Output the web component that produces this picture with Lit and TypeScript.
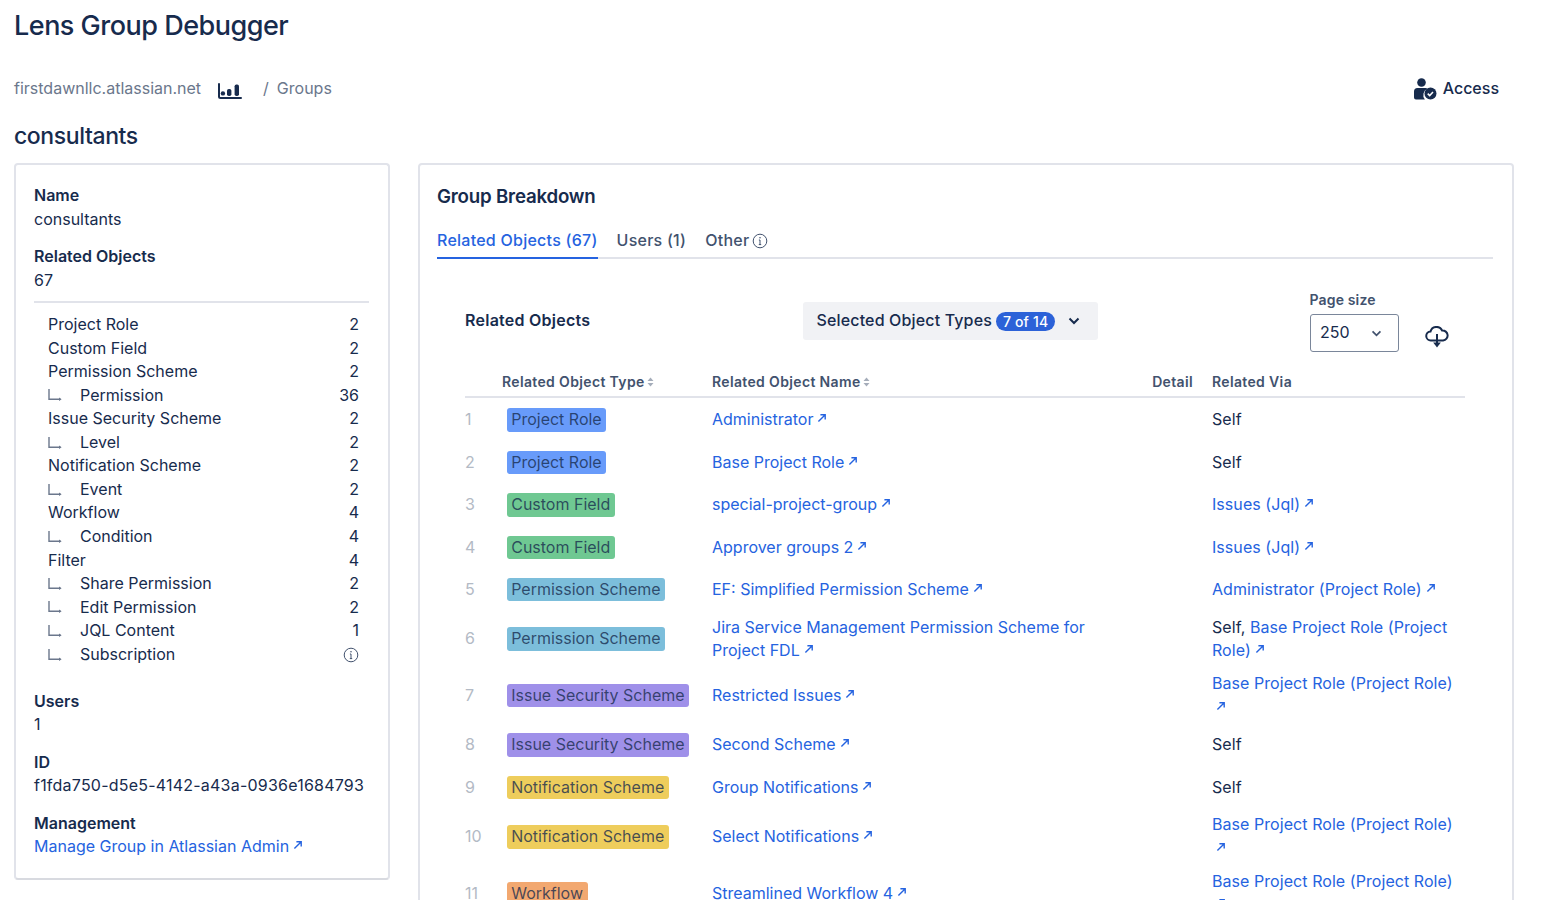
import { LitElement, css, html, svg, TemplateResult } from "lit";
import { customElement } from "lit/decorators.js";

type Kind = "role" | "field" | "perm" | "sec" | "notif" | "flow";

interface Row {
  n: number;
  kind: Kind;
  type: string;
  name: string;
  via: TemplateResult;
  tall?: boolean;
}

const extIcon = html`<svg class="ext" viewBox="0 0 10 10" width="10" height="10" fill="none" stroke="currentColor" stroke-width="1.4"><path d="M1.4 8.6 8 2M3.4 1.8H8.2V6.6"/></svg>`;

const infoIcon = html`<svg class="info" viewBox="0 0 16 16" width="16" height="16" fill="none" stroke="currentColor" stroke-width="1"><circle cx="8" cy="8" r="6.8"/><path d="M8 7v4.6M6.8 11.6h2.4M6.9 7h1.1" stroke-width="1"/><circle cx="8" cy="4.8" r=".8" fill="currentColor" stroke="none"/></svg>`;

const subIcon = html`<svg class="sub" viewBox="0 0 14 12" width="14" height="12" fill="none" stroke="#6b778c" stroke-width="1.4"><path d="M1 0v10.2h11.5"/><path d="M11 8.4 13.6 10.2 11 12z" fill="#6b778c" stroke="none"/></svg>`;

const chartIcon = svg`<path d="M1 1v12.5a1.5 1.5 0 0 0 1.5 1.5H23" fill="none" stroke="currentColor" stroke-width="2" stroke-linecap="round"/><circle cx="4.9" cy="10.4" r="2.2" fill="currentColor"/><rect x="9" y="6" width="4.4" height="7" rx="1.8" fill="currentColor"/><rect x="16.6" y="1.4" width="4.4" height="11.6" rx="1.8" fill="currentColor"/>`;

const link = (t: string) => html`<a>${t}${extIcon}</a>`;
const self = html`Self`;

const rows: Row[] = [
  { n: 1, kind: "role", type: "Project Role", name: "Administrator", via: self },
  { n: 2, kind: "role", type: "Project Role", name: "Base Project Role", via: self },
  { n: 3, kind: "field", type: "Custom Field", name: "special-project-group", via: link("Issues (Jql)") },
  { n: 4, kind: "field", type: "Custom Field", name: "Approver groups 2", via: link("Issues (Jql)") },
  { n: 5, kind: "perm", type: "Permission Scheme", name: "EF: Simplified Permission Scheme", via: link("Administrator (Project Role)") },
  { n: 6, kind: "perm", type: "Permission Scheme", name: "Jira Service Management Permission Scheme for Project FDL", via: html`Self, ${link("Base Project Role (Project Role)")}`, tall: true },
  { n: 7, kind: "sec", type: "Issue Security Scheme", name: "Restricted Issues", via: link("Base Project Role (Project Role)"), tall: true },
  { n: 8, kind: "sec", type: "Issue Security Scheme", name: "Second Scheme", via: self },
  { n: 9, kind: "notif", type: "Notification Scheme", name: "Group Notifications", via: self },
  { n: 10, kind: "notif", type: "Notification Scheme", name: "Select Notifications", via: link("Base Project Role (Project Role)"), tall: true },
  { n: 11, kind: "flow", type: "Workflow", name: "Streamlined Workflow 4", via: link("Base Project Role (Project Role)"), tall: true },
];

const counts: [string, string, boolean][] = [
  ["Project Role", "2", false],
  ["Custom Field", "2", false],
  ["Permission Scheme", "2", false],
  ["Permission", "36", true],
  ["Issue Security Scheme", "2", false],
  ["Level", "2", true],
  ["Notification Scheme", "2", false],
  ["Event", "2", true],
  ["Workflow", "4", false],
  ["Condition", "4", true],
  ["Filter", "4", false],
  ["Share Permission", "2", true],
  ["Edit Permission", "2", true],
  ["JQL Content", "1", true],
  ["Subscription", "", true],
];

const sortIcon = html`<svg class="sort" viewBox="0 0 7 10" width="7" height="10" fill="#a5adba"><path d="M3.5 0.5 6.5 4H.5zM3.5 9.5.5 6h6z"/></svg>`;

@customElement("app-root")
export class AppRoot extends LitElement {
  static styles = css`
    :host {
      display: block;
      height: 900px;
      overflow: hidden;
      box-sizing: border-box;
      padding: 0 33.5px 0 14px;
      background: #fff;
      color: #172b4d;
      font-family: Inter, "Liberation Sans", sans-serif;
      font-size: 16px;
      line-height: 23.57px;
    }
    h1 {
      margin: 0;
      padding-top: 9px;
      font-size: 27px;
      line-height: 33px;
      font-weight: 500;
      letter-spacing: -0.5px;
    }
    .crumbs {
      display: flex;
      align-items: center;
      margin-top: 35px;
      height: 24px;
      color: #6b778c;
    }
    .crumbs > svg {
      margin: 4px 0 0 17px;
      color: #172b4d;
    }
    .crumbs .sep {
      margin-left: 21px;
      margin-right: 8px;
    }
    .access {
      margin-left: auto;
      margin-right: 14.5px;
      display: flex;
      align-items: center;
      gap: 6px;
      color: #172b4d;
      font-weight: 500;
    }
    h2 {
      margin: 20px 0 0;
      font-size: 23px;
      line-height: 30px;
      font-weight: 500;
      letter-spacing: -0.4px;
    }
    .main {
      display: flex;
      align-items: flex-start;
      gap: 28px;
      margin-top: 12px;
    }
    .card {
      box-sizing: border-box;
      border: 2px solid #e1e3ea;
      border-radius: 4px;
      background: #fff;
    }
    .side {
      width: 375.5px;
      flex: none;
      padding: 19px 19px 19px 18px;
      border-bottom-color: #d8dae0;
    }
    .field + .field {
      margin-top: 14px;
    }
    .field b {
      display: block;
      font-weight: 600;
    }
    .mono-ish {
      letter-spacing: 0.22px;
    }
    .counts {
      border-top: 2px solid #e1e3ea;
      margin: 9px 0 23.3px;
      padding: 9.7px 9.5px 0 14px;
    }
    .count-row {
      display: flex;
      align-items: center;
      justify-content: space-between;
    }
    .count-row .label,
    .count-row .value {
      display: flex;
      align-items: center;
    }
    .sub {
      margin-right: 18px;
    }
    a {
      color: #2563e0;
      text-decoration: none;
    }
    .ext {
      margin-left: 4px;
      vertical-align: 2px;
    }
    .info {
      color: #42526e;
    }
    .break {
      flex: 1;
      min-width: 0;
      padding: 20px 19px 0 17.5px;
      height: 760px;
    }
    .break h3 {
      margin: 0;
      font-size: 18.7px;
      line-height: 24px;
      font-weight: 600;
      letter-spacing: -0.2px;
    }
    .tabs {
      display: flex;
      gap: 19px;
      margin-top: 16px;
      border-bottom: 2px solid #e1e3ea;
      color: #42526e;
      font-weight: 500;
      letter-spacing: 0.25px;
    }
    .tab {
      display: flex;
      align-items: center;
      gap: 3px;
      height: 32px;
      margin-bottom: -2px;
      border-bottom: 2px solid transparent;
    }
    .tab.on {
      color: #2563e0;
      border-bottom-color: #2563e0;
    }
    .inner {
      padding: 0 28px;
    }
    .bar {
      display: flex;
      align-items: center;
      height: 62px;
      margin-top: 31px;
    }
    .bar .title {
      font-weight: 600;
      width: 337.5px;
      letter-spacing: 0.25px;
    }
    .types {
      display: flex;
      align-items: center;
      box-sizing: border-box;
      width: 295.5px;
      height: 38px;
      padding: 0 14px;
      background: #f1f2f5;
      border-radius: 3px;
      font-weight: 500;
      letter-spacing: 0.15px;
    }
    .pill {
      margin-left: 4px;
      height: 19px;
      line-height: 19px;
      padding: 0 7px;
      border-radius: 10px;
      background: #2c62d8;
      color: #fff;
      font-size: 14px;
    }
    .types svg {
      margin-left: 13px;
    }
    .size {
      margin-left: auto;
      margin-right: 26px;
      width: 89px;
    }
    .size label {
      display: block;
      margin-top: -1px;
      color: #42526e;
      font-size: 14px;
      line-height: 20px;
      font-weight: 600;
      letter-spacing: 0.15px;
    }
    .select {
      display: flex;
      align-items: center;
      justify-content: space-between;
      box-sizing: border-box;
      height: 38px;
      margin-top: 4px;
      padding: 1px 16px 0 9.5px;
      border: 1.5px solid #7a869a;
      border-radius: 3px;
    }
    .cloud {
      margin: 32px 16px 0 0;
      flex: none;
    }
    table {
      width: 100%;
      table-layout: fixed;
      border-collapse: collapse;
      margin-top: 12px;
    }
    th {
      height: 28px;
      padding: 4px 9.5px 0;
      color: #42526e;
      font-size: 14px;
      font-weight: 600;
      letter-spacing: 0.35px;
      text-align: left;
      border-bottom: 2px solid #e1e3ea;
      white-space: nowrap;
    }
    th.detail {
      text-align: right;
    }
    .sort {
      margin-left: 2px;
    }
    td {
      height: 33px;
      padding: 4.7px 9.5px;
      vertical-align: middle;
    }
    tbody tr:first-child td {
      padding-top: 5.7px;
    }
    tr.tall td {
      height: 47.14px;
    }
    td.via {
      letter-spacing: 0.06px;
    }
    td.num,
    th.num {
      padding-left: 0;
      padding-right: 0;
      color: #b3bac5;
    }
    .badge {
      display: inline-block;
      margin-left: 4.5px;
      padding: 0 4.7px;
      border-radius: 3px;
      white-space: nowrap;
      color: rgba(23, 43, 77, 0.78);
    }
    .role { background: #689bfa; }
    .field-b { background: #6fc892; }
    .perm { background: #7cbedb; }
    .sec { background: #9f90e9; }
    .notif { background: #eecd5c; }
    .flow { background: #f2a870; }
  `;

  render() {
    return html`
      <h1>Lens Group Debugger</h1>
      <div class="crumbs">
        <span>firstdawnllc.atlassian.net</span>
        <svg viewBox="0 0 24 16" width="24" height="16">${chartIcon}</svg>
        <span class="sep">/</span>
        <span>Groups</span>
        <div class="access">
          <svg viewBox="0 0 23 22" width="23" height="22" fill="#172b4d">
            <circle cx="7.5" cy="4.5" r="4.3"/>
            <path d="M0 13.5a3.5 3.5 0 0 1 3.5-3.5h8a3.5 3.5 0 0 1 2 .6 7 7 0 0 0-2.6 10.9H2a2 2 0 0 1-2-2z"/>
            <circle cx="16.5" cy="15.5" r="6"/>
            <path d="M13.7 15.6l2 2 3.3-3.6" fill="none" stroke="#fff" stroke-width="1.5"/>
          </svg>
          Access
        </div>
      </div>
      <h2>consultants</h2>
      <div class="main">
        <section class="card side">${this.renderSide()}</section>
        <section class="card break">
          <h3>Group Breakdown</h3>
          <div class="tabs">
            <div class="tab on">Related Objects (67)</div>
            <div class="tab">Users (1)</div>
            <div class="tab">Other ${infoIcon}</div>
          </div>
          <div class="inner">
            <div class="bar">
              <div class="title">Related Objects</div>
              <div class="types">
                Selected Object Types<span class="pill">7 of 14</span>
                <svg viewBox="0 0 12 8" width="12" height="8" fill="none" stroke="#172b4d" stroke-width="2"><path d="M1.5 1.5 6 6l4.5-4.5"/></svg>
              </div>
              <div class="size">
                <label>Page size</label>
                <div class="select">
                  250
                  <svg viewBox="0 0 12 8" width="11" height="7" fill="none" stroke="#42526e" stroke-width="2"><path d="M1.5 1.5 6 6l4.5-4.5"/></svg>
                </div>
              </div>
              <svg class="cloud" viewBox="0 0 24 22" width="24" height="22" fill="none" stroke="#172b4d" stroke-width="2">
                <path d="M6 14.5a4.5 4.5 0 0 1-.5-9 6.2 6.2 0 0 1 11.6-1 5 5 0 0 1 1 10z"/>
                <path d="M12 8v10"/>
                <path d="M8.2 16.5h7.6L12 21.5z" fill="#172b4d" stroke="none"/>
              </svg>
            </div>
            ${this.renderTable()}
          </div>
        </section>
      </div>
    `;
  }

  renderSide() {
    return html`
      <div class="field"><b>Name</b>consultants</div>
      <div class="field"><b>Related Objects</b>67</div>
      <div class="counts">
        ${counts.map(
          ([label, value, nested]) => html`
            <div class="count-row">
              <span class="label">${nested ? subIcon : ""}${label}</span>
              <span class="value">${value || infoIcon}</span>
            </div>
          `
        )}
      </div>
      <div class="field"><b>Users</b>1</div>
      <div class="field"><b>ID</b><span class="mono-ish">f1fda750-d5e5-4142-a43a-0936e1684793</span></div>
      <div class="field"><b>Management</b>${link("Manage Group in Atlassian Admin")}</div>
    `;
  }

  renderTable() {
    return html`
      <table>
        <colgroup>
          <col style="width:27.5px" />
          <col style="width:210px" />
          <col style="width:431px" />
          <col style="width:69px" />
          <col />
        </colgroup>
        <thead>
          <tr>
            <th class="num"></th>
            <th>Related Object Type${sortIcon}</th>
            <th>Related Object Name${sortIcon}</th>
            <th class="detail">Detail</th>
            <th>Related Via</th>
          </tr>
        </thead>
        <tbody>
          ${rows.map(
            (r) => html`
              <tr class=${r.tall ? "tall" : ""}>
                <td class="num">${r.n}</td>
                <td><span class="badge ${r.kind === "field" ? "field-b" : r.kind}">${r.type}</span></td>
                <td>${link(r.name)}</td>
                <td></td>
                <td class="via">${r.via}</td>
              </tr>
            `
          )}
        </tbody>
      </table>
    `;
  }
}
